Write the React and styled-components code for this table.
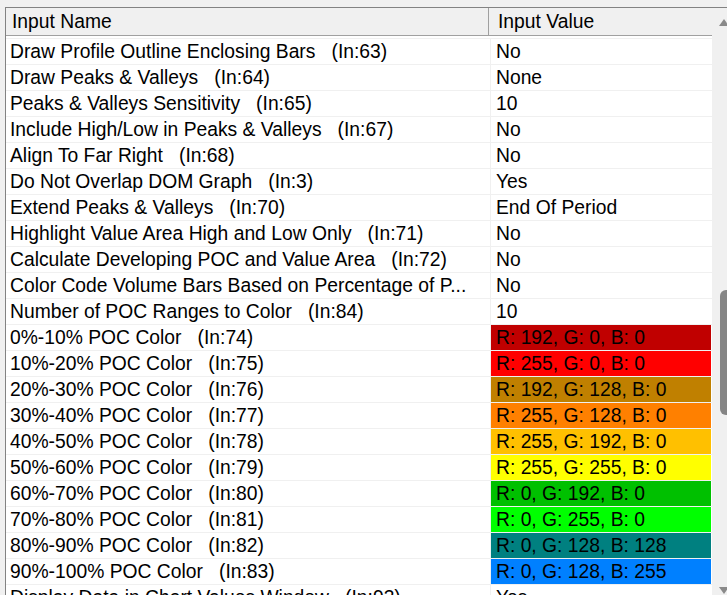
import React from "react";
import styled, { createGlobalStyle } from "styled-components";

const GlobalStyle = createGlobalStyle`
  html, body {
    margin: 0;
    padding: 0;
    background: #f0f0f0;
    overflow: hidden;
  }
  body {
    font-family: "Liberation Sans", Arial, sans-serif;
  }
`;

const Frame = styled.div`
  padding: 7px 0 0 5px;
  height: 595px;
  box-sizing: border-box;
`;

const Panel = styled.div`
  display: flex;
  width: 740px;
  height: 100%;
  border-top: 1px solid #828282;
  border-left: 1px solid #828282;
  background: #fff;
`;

const ListArea = styled.div`
  width: 706px;
  flex: none;
  overflow: hidden;
`;

const Header = styled.div`
  display: flex;
  height: 27px;
  background: #f0f0f0;
  border-bottom: 1px solid #a0a0a0;
  margin-bottom: 2px;
`;

const HeadCell = styled.div`
  width: ${(p) => p.$w}px;
  flex: none;
  box-sizing: border-box;
  padding: 1px 0 0 ${(p) => p.$pad}px;
  font-size: 19.3px;
  line-height: 26px;
  color: #000;
  border-right: ${(p) => (p.$sep ? "1px solid #a0a0a0" : "none")};
  white-space: nowrap;
`;

const Row = styled.div`
  display: flex;
  height: 25px;
  border-top: 1px solid #f0f0f0;
`;

const NameCell = styled.div`
  width: 485px;
  flex: none;
  box-sizing: border-box;
  padding-left: 4px;
  font-size: 19.3px;
  line-height: 25px;
  color: #000;
  white-space: pre;
  overflow: hidden;
  border-right: 1px solid #f0f0f0;
`;

const ValueCell = styled.div`
  width: 220px;
  flex: none;
  box-sizing: border-box;
  padding-left: 5px;
  font-size: 19.3px;
  line-height: 25px;
  color: #000;
  white-space: pre;
  background: ${(p) => p.$bg || "#fff"};
`;

const ScrollBar = styled.div`
  width: 24px;
  flex: none;
  background: #f0f0f0;
  display: flex;
  flex-direction: column;
  align-items: flex-start;
  padding-left: 7px;
  box-sizing: border-box;
`;

const Arrow = styled.svg`
  display: block;
  margin-top: ${(p) => p.$top}px;
`;

const Thumb = styled.div`
  width: 12px;
  height: 125px;
  margin-top: 264px;
  margin-left: 1px;
  background: #858585;
  border-radius: 6px;
`;

const rows = [
  ["Draw Profile Outline Enclosing Bars   (In:63)", "No"],
  ["Draw Peaks & Valleys   (In:64)", "None"],
  ["Peaks & Valleys Sensitivity   (In:65)", "10"],
  ["Include High/Low in Peaks & Valleys   (In:67)", "No"],
  ["Align To Far Right   (In:68)", "No"],
  ["Do Not Overlap DOM Graph   (In:3)", "Yes"],
  ["Extend Peaks & Valleys   (In:70)", "End Of Period"],
  ["Highlight Value Area High and Low Only   (In:71)", "No"],
  ["Calculate Developing POC and Value Area   (In:72)", "No"],
  ["Color Code Volume Bars Based on Percentage of P...", "No"],
  ["Number of POC Ranges to Color   (In:84)", "10"],
  ["0%-10% POC Color   (In:74)", [192, 0, 0]],
  ["10%-20% POC Color   (In:75)", [255, 0, 0]],
  ["20%-30% POC Color   (In:76)", [192, 128, 0]],
  ["30%-40% POC Color   (In:77)", [255, 128, 0]],
  ["40%-50% POC Color   (In:78)", [255, 192, 0]],
  ["50%-60% POC Color   (In:79)", [255, 255, 0]],
  ["60%-70% POC Color   (In:80)", [0, 192, 0]],
  ["70%-80% POC Color   (In:81)", [0, 255, 0]],
  ["80%-90% POC Color   (In:82)", [0, 128, 128]],
  ["90%-100% POC Color   (In:83)", [0, 128, 255]],
  ["Display Data in Chart Values Window   (In:93)", "Yes"],
];

const App = () => {
  return (
    <>
      <GlobalStyle />
      <Frame>
        <Panel>
          <ListArea>
            <Header>
              <HeadCell $w={483} $pad={6} $sep>
                Input Name
              </HeadCell>
              <HeadCell $w={222} $pad={9}>
                Input Value
              </HeadCell>
            </Header>
            {rows.map(([name, value]) => {
              const isColor = Array.isArray(value);
              return (
                <Row key={name}>
                  <NameCell>{name}</NameCell>
                  <ValueCell $bg={isColor ? `rgb(${value.join(",")})` : null}>
                    {isColor
                      ? `R: ${value[0]}, G: ${value[1]}, B: ${value[2]}`
                      : value}
                  </ValueCell>
                </Row>
              );
            })}
          </ListArea>
          <ScrollBar>
            <Arrow $top={10} width="10" height="8" viewBox="0 0 10 8">
              <polygon points="0,8 5,1 10,8" fill="#8a8a8a" />
            </Arrow>
            <Thumb />
            <Arrow $top={172} width="10" height="8" viewBox="0 0 10 8">
              <polygon points="0,0 10,0 5,7" fill="#8a8a8a" />
            </Arrow>
          </ScrollBar>
        </Panel>
      </Frame>
    </>
  );
};

export default App;
